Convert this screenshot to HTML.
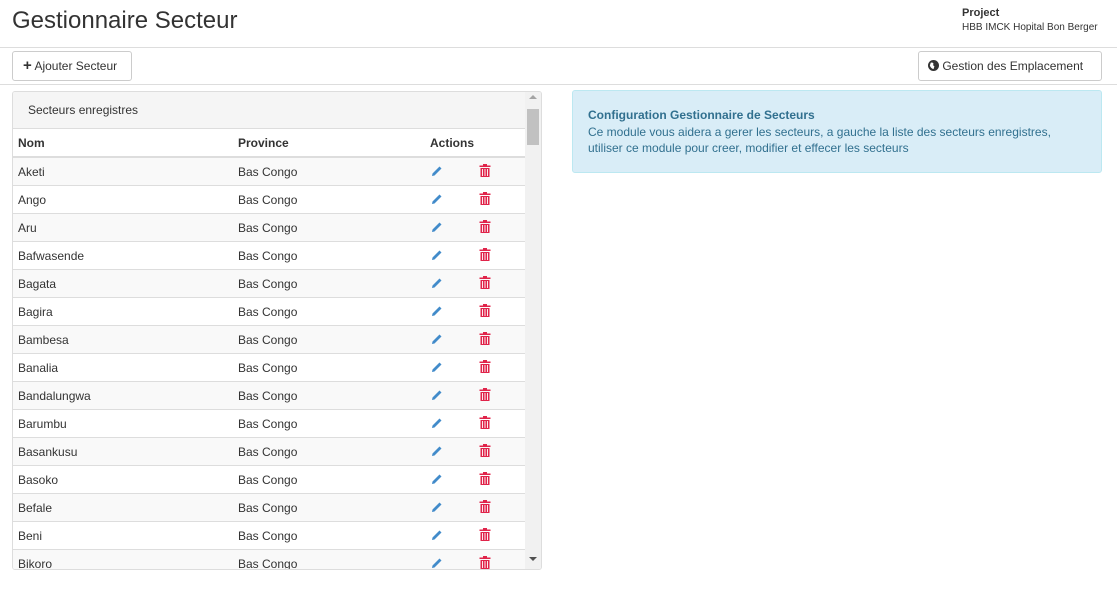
<!DOCTYPE html>
<html><head><meta charset="utf-8"><style>
*{box-sizing:border-box;margin:0;padding:0}
body{width:1117px;height:597px;overflow:hidden;background:#fff;font-family:"Liberation Sans",Arial,sans-serif;color:#333;font-size:12px;position:relative}
.abs{position:absolute}
h1{position:absolute;left:12px;top:7px;font-size:24px;font-weight:normal;color:#333}
.hr{position:absolute;left:0;width:1117px;height:1px;background:#ddd}
.btn{position:absolute;border:1px solid #ccc;border-radius:3px;background:#fff;font-size:12px;color:#333;height:30px;line-height:28px;padding:0 10px}
.panel{position:absolute;left:12px;top:91px;width:530px;height:479px;border:1px solid #ddd;border-radius:3px;overflow:hidden}
.ph{height:37px;background:#f5f5f5;border-bottom:1px solid #ddd;padding-left:15px;line-height:36px;font-size:12px}
table{border-collapse:collapse;width:512px;font-size:12px}
th{text-align:left;font-weight:bold;height:28px;border-bottom:2px solid #ddd;padding-left:5px;padding-top:1px}
td{height:28px;border-top:1px solid #ddd;padding-left:5px;padding-top:2px}
tr.o td{background:#f9f9f9}
.sb{position:absolute;left:512px;top:0;width:16px;height:477px;background:#f1f1f1}
.info{position:absolute;left:572px;top:90px;width:530px;height:83px;background:#d9edf7;border:1px solid #bce8f1;border-radius:3px;color:#31708f;padding:16px 15px;font-size:12px;line-height:16.5px}
</style></head><body>
<h1>Gestionnaire Secteur</h1>
<div class="abs" style="left:962px;top:7px;font-size:11px;font-weight:bold">Project</div>
<div class="abs" style="left:962px;top:22px;font-size:10px">HBB IMCK Hopital Bon Berger</div>
<div class="hr" style="top:47px"></div>
<div class="btn" style="left:12px;top:51px;width:120px"><b style="font-size:15px">+</b> Ajouter Secteur</div>
<div class="btn" style="left:918px;top:51px;width:184px;padding:0 9px">
<svg width="11" height="11" viewBox="0 0 12 12" style="vertical-align:-1px"><circle cx="6" cy="6" r="6" fill="#333"/><path d="M3 3 Q5 2 6 4 Q5 6 7 7 L6 10 Q3 9 2 6Z" fill="#fff"/></svg> Gestion des Emplacement</div>
<div class="hr" style="top:84px"></div>
<div class="panel">
<div class="ph">Secteurs enregistres</div>
<table>
<tr><th style="width:220px">Nom</th><th style="width:192px">Province</th><th>Actions</th></tr>
<tbody id="tb">
<tr class="o"><td>Aketi</td><td>Bas Congo</td><td>I</td></tr>
</tbody></table>
<div class="sb"><div style="position:absolute;left:4px;top:3px;width:0;height:0;border-left:4px solid transparent;border-right:4px solid transparent;border-bottom:4px solid #a3a3a3"></div>
<div style="position:absolute;left:2px;top:17px;width:12px;height:36px;background:#c1c1c1"></div>
<div style="position:absolute;left:4px;bottom:8px;width:0;height:0;border-left:4px solid transparent;border-right:4px solid transparent;border-top:4px solid #505050"></div></div>
</div>
<div class="info"><b>Configuration Gestionnaire de Secteurs</b><br>Ce module vous aidera a gerer les secteurs, a gauche la liste des secteurs enregistres, utiliser ce module pour creer, modifier et effecer les secteurs</div>
<script>
var n=["Aketi","Ango","Aru","Bafwasende","Bagata","Bagira","Bambesa","Banalia","Bandalungwa","Barumbu","Basankusu","Basoko","Befale","Beni","Bikoro"];
var pen='<svg width="12" height="12" viewBox="0 0 12 12"><path d="M1 11 L1.5 8.5 L8.5 1.5 L10.5 3.5 L3.5 10.5Z" fill="#428bca"/></svg>';
var tr='<svg width="12" height="13" viewBox="0 0 12 13"><path d="M4 0h4v1.5h3.5v1.5h-11v-1.5h3.5z M1.5 4h9v9h-9z" fill="#e0244a"/><path d="M3.5 5v7M6 5v7M8.5 5v7" stroke="#fff" stroke-width="0.9"/></svg>';
var h="";n.forEach(function(x,i){h+='<tr class="'+(i%2?'':'o')+'"><td>'+x+'</td><td>Bas Congo</td><td style="padding-left:6px">'+pen+'<span style="display:inline-block;width:36px"></span>'+tr+'</td></tr>';});
document.getElementById("tb").innerHTML=h;
</script>
</body></html>
